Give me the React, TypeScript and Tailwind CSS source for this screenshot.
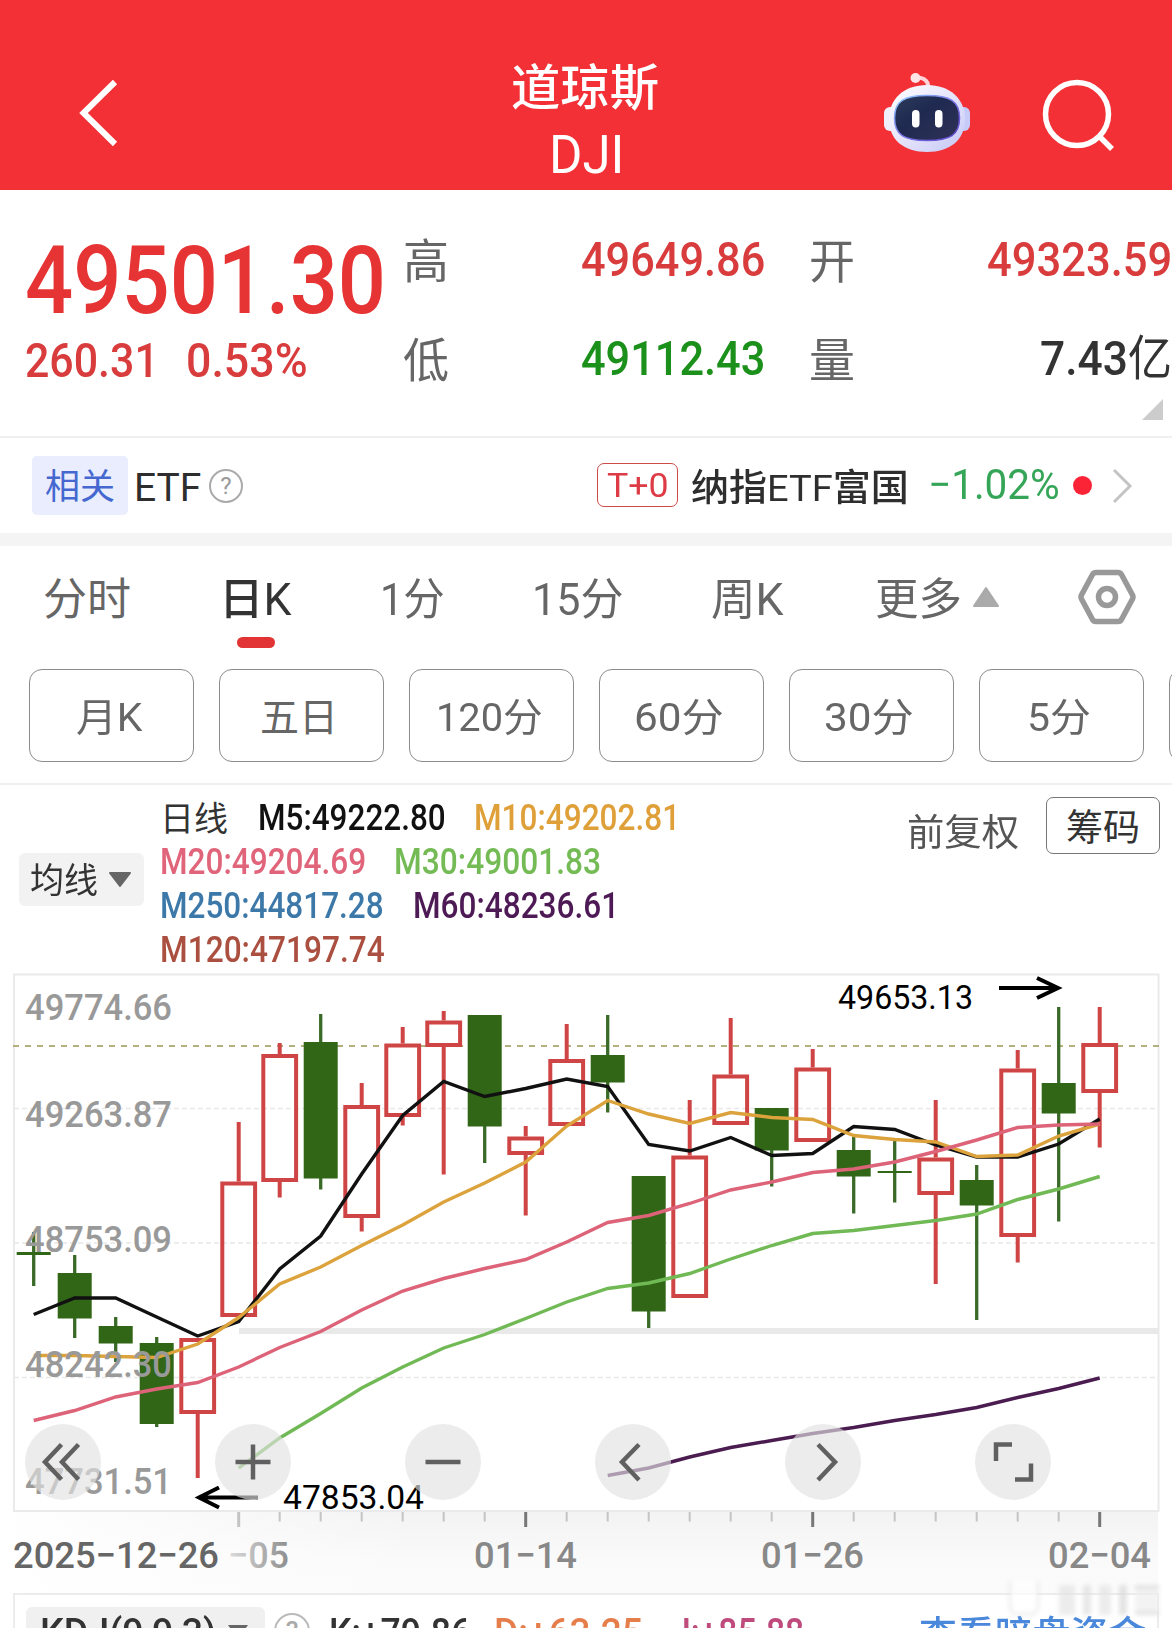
import { useLayoutEffect, useRef, useState } from 'react';
import type { ReactNode } from 'react';

type FitProps = {
  children: ReactNode;
  className?: string;
};

// Stretches its text horizontally so that it fills the width given in className.
function Fit({ children, className = '' }: FitProps) {
  const box = useRef<HTMLDivElement>(null);
  const text = useRef<HTMLSpanElement>(null);
  const [scale, setScale] = useState(1);

  useLayoutEffect(() => {
    if (box.current && text.current) {
      setScale(box.current.clientWidth / text.current.offsetWidth);
    }
  }, []);

  return (
    <div ref={box} className={`shrink-0 whitespace-nowrap leading-none ${className}`}>
      <span ref={text} className="inline-block origin-left" style={{ transform: `scaleX(${scale})` }}>
        {children}
      </span>
    </div>
  );
}

function RobotIcon() {
  return (
    <svg viewBox="882 70 90 84" className="h-[84px] w-[90px]">
      <defs>
        <linearGradient id="helmet" x1="0" y1="0" x2="1" y2="1">
          <stop offset="0" stopColor="#ffffff" />
          <stop offset="0.5" stopColor="#e6e4fb" />
          <stop offset="1" stopColor="#c3c6f6" />
        </linearGradient>
        <linearGradient id="visor" x1="0" y1="0" x2="1" y2="1">
          <stop offset="0" stopColor="#2c3a5c" />
          <stop offset="0.4" stopColor="#1f2a50" />
          <stop offset="1" stopColor="#2f3158" />
        </linearGradient>
        <linearGradient id="rim" x1="0" y1="0" x2="1" y2="1">
          <stop offset="0" stopColor="#8fd0ff" />
          <stop offset="0.5" stopColor="#7d78e8" />
          <stop offset="1" stopColor="#5b3fc4" />
        </linearGradient>
      </defs>
      <path d="M915 79C920 76 929 79 928 88" fill="none" stroke="#ffd3d8" strokeWidth="4" />
      <circle cx="915.500" cy="78" r="5" fill="#ffe3e6" />
      <rect x="884" y="107" width="14" height="24" rx="6" fill="#f1eefc" />
      <rect x="956" y="107" width="14" height="24" rx="6" fill="#c6caf8" />
      <path d="M927 85C950 85 965 99 965 119C965 140 950 152 927 152C904 152 889 140 889 119C889 99 904 85 927 85Z" fill="url(#helmet)" />
      <path d="M927 95.500C950 95.500 959.500 101 959.500 118C959.500 135 950 140.500 927 140.500C904 140.500 894.500 135 894.500 118C894.500 101 904 95.500 927 95.500Z" fill="url(#visor)" stroke="url(#rim)" strokeWidth="1.500" />
      <rect x="912" y="110" width="7.500" height="17.500" rx="3.700" fill="#fff" />
      <rect x="935" y="110" width="7.500" height="17.500" rx="3.700" fill="#fff" />
    </svg>
  );
}

function Header() {
  return (
    <header className="flex h-[190px] bg-[#f23035] text-white">
      <svg viewBox="0 0 50 80" className="mt-[73px] ml-[73px] h-20 w-[50px]">
        <path d="M42 9L10.500 40L42 71" fill="none" stroke="#fff" strokeWidth="6" />
      </svg>
      <div className="ml-[388px] flex w-[150px] flex-col items-center pt-[64px]">
        <Fit className="-ml-[2px] w-[148px] text-[49px] font-medium">道琼斯</Fit>
        <Fit className="mt-[16px] w-[75px] text-[53px]">DJI</Fit>
      </div>
      <div className="mt-[70px] ml-[221px]">
        <RobotIcon />
      </div>
      <svg viewBox="0 0 80 80" className="mt-[74px] ml-[66px] h-20 w-20">
        <ellipse cx="39" cy="40" rx="31.500" ry="31.500" fill="none" stroke="#fff" strokeWidth="5.500" />
        <path d="M61 62L74 75" stroke="#fff" strokeWidth="5.500" />
      </svg>
    </header>
  );
}

function Quote() {
  return (
    <section className="relative flex h-[248px] border-b-2 border-[#f0f0f0]">
      <div className="w-[402px] shrink-0 pt-[44px] pl-[25px] text-[#e63434]">
        <Fit className="w-[361px] text-[94px] font-medium">49501.30</Fit>
        <div className="mt-[9px] flex text-[48px] font-medium text-[#d93c3c]">
          <Fit className="w-[134px]">260.31</Fit>
          <Fit className="ml-[27px] w-[122px]">0.53%</Fit>
        </div>
      </div>
      <div className="grid h-min grid-cols-[177px_230px_177px_186px] gap-y-[51px] pt-[46px] text-[48px] font-medium">
        <Fit className="mt-[2px] ml-[1px] -mb-[2px] w-[46px] text-[47px] font-normal text-[#666]">高</Fit>
        <Fit className="ml-[2px] w-[184px] text-[#d93c3c]">49649.86</Fit>
        <Fit className="mt-[2px] -mb-[2px] w-[46px] text-[47px] font-normal text-[#666]">开</Fit>
        <Fit className="ml-[1px] w-[185px] text-[#d93c3c]">49323.59</Fit>
        <Fit className="mt-[2px] ml-[1px] -mb-[2px] w-[46px] text-[47px] font-normal text-[#666]">低</Fit>
        <Fit className="ml-[2px] w-[184px] text-[#1b901b]">49112.43</Fit>
        <Fit className="mt-[2px] -mb-[2px] w-[46px] text-[47px] font-normal text-[#666]">量</Fit>
        <Fit className="ml-[54px] w-[132px] text-[#333]">
          7.43<span className="font-normal">亿</span>
        </Fit>
      </div>
      <svg viewBox="0 0 21 21" className="absolute right-[9px] bottom-[16px] h-[21px] w-[21px]">
        <path d="M21 0V21H0Z" fill="#ccc" />
      </svg>
    </section>
  );
}

function RelatedEtf() {
  return (
    <section className="flex h-[108px] items-center border-b-[13px] border-[#f4f4f4]">
      <div className="ml-8 flex h-[59px] w-24 items-center justify-center rounded-[5px] bg-[#e9edfd] pt-1">
        <Fit className="w-[70px] text-[35px] text-[#4468d0]">相关</Fit>
      </div>
      <Fit className="mt-[5px] ml-[6px] w-[67px] text-[39px] text-[#2e2e2e]">ETF</Fit>
      <div className="ml-[8px] flex h-[34px] w-[34px] items-center justify-center rounded-full border-2 border-[#aaa] text-[24px] leading-none text-[#999]">
        ?
      </div>
      <div className="-mt-[2px] ml-[354px] flex h-11 w-[81px] items-center justify-center rounded-[7px] border-[1.5px] border-[#cc4a4a]">
        <Fit className="w-[62px] text-[34px] text-[#dd3b45]">T+0</Fit>
      </div>
      <Fit className="mt-[5px] ml-[13px] w-[218px] text-[37px] font-medium text-[#2e2e2e]">
        纳指<span className="font-normal">ETF</span>富国
      </Fit>
      <Fit className="-mt-[2px] ml-[19px] w-[132px] text-[42px] text-[#35a558]">−1.02%</Fit>
      <div className="ml-[13px] h-[19px] w-[19px] rounded-full bg-[#fb2436]" />
      <svg viewBox="0 0 22 36" className="ml-[20px] h-9 w-[22px]">
        <path d="M2 2L18 18L2 34" fill="none" stroke="#c4c4c4" strokeWidth="3" />
      </svg>
    </section>
  );
}

function PeriodTabs() {
  return (
    <nav className="flex h-[104px] items-center text-[44px] text-[#666]">
      <Fit className="mt-[4px] ml-[43px] w-[88px]">分时</Fit>
      <div className="relative mt-[4px] ml-[88px] font-medium text-[#333]">
        <Fit className="w-[73px]">
          日<span className="font-normal">K</span>
        </Fit>
        <div className="absolute -bottom-[26px] left-[18px] h-[11px] w-[38px] rounded-full bg-[#e23434]" />
      </div>
      <Fit className="mt-[4px] ml-[88px] w-[65px]">1分</Fit>
      <Fit className="mt-[4px] ml-[87px] w-[91px]">15分</Fit>
      <Fit className="mt-[4px] ml-[88px] w-[73px]">周K</Fit>
      <Fit className="mt-[4px] ml-[91px] w-[87px]">更多</Fit>
      <svg viewBox="0 0 28 22" className="-mt-[2px] ml-[10px] h-[22px] w-[28px]">
        <path d="M14 2L26 20H2Z" fill="#aaa" stroke="#aaa" strokeWidth="2" strokeLinejoin="round" />
      </svg>
      <svg viewBox="0 0 58 56" className="-mt-[2px] ml-[78px] h-14 w-[58px]">
        <path d="M18 3.500H40Q42.500 3.500 43.500 5.500L54.500 26Q55.500 28 54.500 30L43.500 50.500Q42.500 52.500 40 52.500H18Q15.500 52.500 14.500 50.500L3.500 30Q2.500 28 3.500 26L14.500 5.500Q15.500 3.500 18 3.500Z" fill="none" stroke="#999" strokeWidth="5.500" />
        <circle cx="29" cy="28" r="8.500" fill="none" stroke="#999" strokeWidth="5.500" />
      </svg>
    </nav>
  );
}

const PERIODS = [
  { label: '月K', width: 'w-[66px]' },
  { label: '五日', width: 'w-[78px]' },
  { label: '120分', width: 'w-[107px]' },
  { label: '60分', width: 'w-[90px]' },
  { label: '30分', width: 'w-[90px]' },
  { label: '5分', width: 'w-[64px]' },
  { label: '', width: 'w-1' },
];

function PeriodButtons() {
  return (
    <div className="flex h-[135px] gap-[25px] overflow-hidden border-b-2 border-[#f0f0f0] pt-[19px] pl-[29px]">
      {PERIODS.map((p) => (
        <button
          key={p.label}
          className="flex h-[93px] w-[165px] shrink-0 items-center justify-center rounded-[13px] border border-[#8c8c8c] pt-[6px] pr-[5px] text-left text-[39px] text-[#666]"
        >
          {p.label && <Fit className={p.width}>{p.label}</Fit>}
        </button>
      ))}
    </div>
  );
}

function MaLegend() {
  return (
    <section className="flex h-[186px] pt-[10px] text-[36px]">
      <button className="mt-[58px] ml-[19px] flex h-[53px] w-[125px] items-center rounded-[6px] bg-[#f2f2f2] pl-[11px] text-left">
        <Fit className="mt-[4px] w-[68px] text-[35px] text-[#333]">均线</Fit>
        <svg viewBox="0 0 24 17" className="ml-[10px] h-[17px] w-6">
          <path d="M2 2H22L12 15Z" fill="#666" stroke="#666" strokeWidth="2" strokeLinejoin="round" />
        </svg>
      </button>
      <div className="ml-[16px] w-[744px]">
        <div className="flex h-11 items-center">
          <Fit className="mt-[3px] w-[68px] text-[34px] text-[#333]">日线</Fit>
          <Fit className="mt-[1px] ml-[30px] w-[188px] font-medium text-[#111]">M5:49222.80</Fit>
          <Fit className="mt-[1px] ml-[28px] w-[206px] font-medium text-[#dfa03a]">M10:49202.81</Fit>
        </div>
        <div className="flex h-11 items-center pt-px font-medium">
          <Fit className="w-[206px] text-[#e0647a]">M20:49204.69</Fit>
          <Fit className="ml-[28px] w-[207px] text-[#74bb55]">M30:49001.83</Fit>
        </div>
        <div className="flex h-11 items-center pt-px font-medium">
          <Fit className="w-[224px] text-[#3c78a8]">M250:44817.28</Fit>
          <Fit className="ml-[29px] w-[206px] text-[#4d1a55]">M60:48236.61</Fit>
        </div>
        <div className="flex h-11 items-center pt-px font-medium">
          <Fit className="w-[225px] text-[#ab5040]">M120:47197.74</Fit>
        </div>
      </div>
      <Fit className="mt-[20px] ml-[3px] w-[112px] text-[37px] text-[#555]">前复权</Fit>
      <button className="mt-[2px] ml-[27px] flex h-[57px] w-[114px] items-center justify-center rounded-[7px] border-[1.5px] border-[#777] pt-[5px] text-left">
        <Fit className="w-[74px] text-[37px] text-[#333]">筹码</Fit>
      </button>
    </section>
  );
}

type Candle = {
  up: boolean;
  high: number;
  top: number;
  bottom: number;
  low: number;
};

const up = (high: number, top: number, bottom: number, low: number): Candle => ({ up: true, high, top, bottom, low });
const down = (high: number, top: number, bottom: number, low: number): Candle => ({ up: false, high, top, bottom, low });

const CANDLES: Candle[] = [
  down(1232, 1252, 1255, 1286),
  down(1255, 1273, 1318.5, 1338),
  down(1317, 1326, 1343.5, 1362),
  down(1337, 1343, 1424, 1427),
  up(1338, 1338, 1414, 1478),
  up(1122, 1181.5, 1317, 1317),
  up(1043, 1054, 1182, 1197.5),
  down(1014, 1042, 1178.5, 1189.5),
  up(1083, 1105, 1218, 1231.5),
  up(1027, 1043.5, 1117, 1125.5),
  up(1011, 1020.5, 1047, 1174.5),
  down(1015, 1015, 1126.5, 1163),
  up(1126, 1136.5, 1155, 1215.5),
  up(1024, 1059, 1126, 1126),
  down(1015, 1055, 1082.5, 1112.5),
  down(1176, 1176, 1311.5, 1328),
  up(1100, 1155.5, 1298, 1298),
  up(1018, 1074.5, 1125, 1125),
  down(1108, 1108, 1150.5, 1186.5),
  up(1049, 1067.5, 1142, 1142),
  down(1137, 1150, 1176.5, 1213.5),
  down(1141, 1171, 1173, 1202.5),
  up(1100, 1157.5, 1195, 1284),
  down(1165, 1180, 1205.5, 1320),
  up(1050, 1068.5, 1237, 1262.5),
  down(1007, 1083, 1113.5, 1221.5),
  up(1007, 1043, 1093, 1147.5),
];

const AVERAGES = [
  {
    color: '#111',
    start: 0,
    values: [1314.5, 1298, 1298, 1317, 1336, 1321.5, 1269, 1236, 1174, 1115.5, 1081.5, 1096.5, 1088.5, 1079, 1086.5, 1144.5, 1151, 1137.5, 1155.5, 1153.5, 1126.5, 1129.5, 1145, 1157, 1157, 1144, 1119],
  },
  {
    color: '#dca23c',
    start: 0,
    values: [1355.5, 1355.5, 1356.5, 1357.5, 1344, 1317.5, 1284, 1267, 1245.5, 1225, 1202, 1183, 1162, 1126, 1100.5, 1114, 1123.5, 1112.5, 1117.5, 1119.5, 1135.5, 1139.5, 1142, 1156.5, 1155, 1136, 1124],
  },
  {
    color: '#dd6379',
    start: 0,
    values: [1420.5, 1410.5, 1397, 1389, 1382.5, 1367, 1347.5, 1331.5, 1310, 1291, 1278.5, 1268.5, 1259.5, 1242, 1222.5, 1215.5, 1203.5, 1190, 1182, 1172.5, 1169, 1162, 1151.5, 1140, 1127.5, 1125, 1124],
  },
  {
    color: '#71b955',
    start: 5,
    values: [1468, 1438, 1413.5, 1388, 1367, 1348, 1334.5, 1318.5, 1302, 1288.5, 1283, 1273.5, 1259, 1245.5, 1233.5, 1230.5, 1225.5, 1220.5, 1214, 1199.5, 1189, 1176.5],
  },
  {
    color: '#4a1c50',
    start: 14,
    values: [1475.5, 1468, 1457, 1447.5, 1440.5, 1433.5, 1427.5, 1420.5, 1414.5, 1407.5, 1397.5, 1388.5, 1378],
  },
];

const PRICE_LABELS = [
  { text: '49774.66', y: 1020 },
  { text: '49263.87', y: 1127 },
  { text: '48753.09', y: 1252 },
  { text: '48242.30', y: 1377 },
  { text: '47731.51', y: 1494 },
];

const DATE_LABELS = [
  { text: '01−14', x: 474, width: 103 },
  { text: '01−26', x: 761, width: 103 },
  { text: '02−04', x: 1048, width: 103 },
];

const TICKS = Array.from({ length: 22 }, (_, i) => i + 5);

const xAt = (i: number) => 33.7 + i * 41;

function CandleShape({ candle, x }: { candle: Candle; x: number }) {
  if (candle.up) {
    return (
      <g stroke="#cf4444" strokeWidth="4">
        <path d={`M${x} ${candle.high}V${candle.top}M${x} ${candle.bottom}V${candle.low}`} />
        <rect x={x - 16.4} y={candle.top + 2} width="32.8" height={candle.bottom - candle.top - 4} fill="none" />
      </g>
    );
  }
  return (
    <g fill="#306616">
      <path d={`M${x} ${candle.high}V${candle.low}`} stroke="#3a6a28" strokeWidth="3.300" />
      <rect x={x - 17} y={candle.top} width="34" height={candle.bottom - candle.top} />
    </g>
  );
}

function KlineChart() {
  return (
    <svg viewBox="0 971 1172 622" className="block h-[622px] w-[1172px]">
      <defs>
        <linearGradient id="axis" x1="0" y1="0" x2="0" y2="1">
          <stop offset="0" stopColor="#f3f3f3" />
          <stop offset="0.6" stopColor="#fafafa" />
          <stop offset="1" stopColor="#fbfbfb" />
        </linearGradient>
        <linearGradient id="axisFade" x1="0" y1="0" x2="1" y2="0">
          <stop offset="0" stopColor="#fff" />
          <stop offset="1" stopColor="#fff" stopOpacity="0" />
        </linearGradient>
        <linearGradient id="dateFade" gradientUnits="userSpaceOnUse" x1="228" y1="0" x2="290" y2="0">
          <stop offset="0" stopColor="#dcdcdc" />
          <stop offset="1" stopColor="#8c8c8c" />
        </linearGradient>
      </defs>

      <rect x="0" y="1512" width="1158" height="81" fill="url(#axis)" />
      <rect x="0" y="1512" width="420" height="81" fill="url(#axisFade)" />
      <rect x="14" y="974.500" width="1144.500" height="536.500" fill="#fff" stroke="#eaeaec" strokeWidth="2" />

      <g stroke="#e8e8e8" strokeWidth="1.500" strokeDasharray="5 3">
        <path d="M14 1108.500H1158" />
        <path d="M14 1243H1158" />
        <path d="M14 1377.500H1158" />
      </g>
      <path d="M239 1331H1159" stroke="#e9e9e9" strokeWidth="6" />
      <path d="M13 1046H1159" stroke="#b3b07e" strokeWidth="2" strokeDasharray="6 6" />

      {CANDLES.map((candle, i) => (
        <CandleShape key={i} candle={candle} x={xAt(i)} />
      ))}

      {AVERAGES.map((line) => (
        <polyline
          key={line.color}
          points={line.values.map((y, i) => `${xAt(line.start + i)},${y}`).join(' ')}
          fill="none"
          stroke={line.color}
          strokeWidth="3.400"
        />
      ))}

      <g fontSize="37.500" fontWeight="500" fill="#999">
        {PRICE_LABELS.map((label) => (
          <text key={label.text} x="25" y={label.y} textLength="147" lengthAdjust="spacingAndGlyphs">
            {label.text}
          </text>
        ))}
      </g>

      <g fontSize="34" fill="#000">
        <text x="838" y="1008.500" textLength="135" lengthAdjust="spacingAndGlyphs">49653.13</text>
        <text x="283" y="1509" textLength="141" lengthAdjust="spacingAndGlyphs">47853.04</text>
      </g>
      <g fill="none" stroke="#000" strokeWidth="4">
        <path d="M999 988H1058M1037 978L1058 988L1037 998" />
        <path d="M258 1497.500H199M219 1487.500L199 1497.500L219 1507.500" />
      </g>

      {TICKS.map((i) => {
        const major = (i - 5) % 7 === 0;
        return (
          <path
            key={i}
            d={`M${xAt(i)} 1512V${major ? 1527 : 1521.5}`}
            stroke={major && i > 5 ? '#777' : '#c4c4c4'}
            strokeWidth={major ? 3 : 2}
          />
        );
      })}

      <g fontSize="37.500" fontWeight="500" fill="#888">
        <text x="13" y="1568" textLength="206" lengthAdjust="spacingAndGlyphs" fill="#666">2025−12−26</text>
        <text x="228" y="1568" textLength="61" lengthAdjust="spacingAndGlyphs" fill="url(#dateFade)">−05</text>
        {DATE_LABELS.map((label) => (
          <text key={label.text} x={label.x} y="1568" textLength={label.width} lengthAdjust="spacingAndGlyphs">
            {label.text}
          </text>
        ))}
      </g>
    </svg>
  );
}

// Icon paths are drawn in a 76x76 box.
const CONTROLS = [
  { name: 'rewind', d: 'M36.500 20.500L20 38L36.500 55.500M53.500 20.500L37 38L53.500 55.500' },
  { name: 'zoom in', d: 'M20.500 38H55.500M38 20.500V55.500' },
  { name: 'zoom out', d: 'M20.500 38H55.500' },
  { name: 'previous', d: 'M44 20.500L27 38L44 56' },
  { name: 'next', d: 'M33 20.500L50 38L33 56' },
  { name: 'fullscreen', d: 'M37 20.500H21V37M40 55.500H56V39.500' },
];

function ChartControls() {
  return (
    <div className="absolute top-[453px] left-[25px] flex gap-[114px]">
      {CONTROLS.map((c) => (
        <button key={c.name} aria-label={c.name} className="h-[76px] w-[76px] rounded-full bg-[#e2e2e2]/65">
          <svg viewBox="0 0 76 76" className="h-[76px] w-[76px]">
            <path d={c.d} fill="none" stroke="#606060" strokeWidth="4.500" />
          </svg>
        </button>
      ))}
    </div>
  );
}

function IndicatorBar() {
  return (
    <section className="relative mx-[13px] h-[80px] border-2 border-[#ececec]">
      <div className="flex pt-[12px] pl-[11px] text-[38px] font-medium">
        <div className="flex h-[56px] w-[239px] shrink-0 items-start rounded-[6px] bg-[#f0f0f0] pt-[7px] pl-[14px] text-[#333]">
          <Fit className="w-[176px]">KDJ(9,9,3)</Fit>
          <svg viewBox="0 0 22 16" className="mt-[10px] ml-[11px] h-4 w-[22px]">
            <path d="M1 1H21L11 15Z" fill="#666" />
          </svg>
        </div>
        <div className="mt-[6px] ml-[9px] flex h-9 w-9 items-center justify-center rounded-full border-2 border-[#bbb] text-[26px] leading-none text-[#aaa]">
          ?
        </div>
        <Fit className="mt-[7px] ml-[19px] w-[142px] text-[#333]">K:+79.86</Fit>
        <Fit className="mt-[7px] ml-[23px] w-[149px] text-[#e67e4c]">D:+63.25</Fit>
        <Fit className="mt-[7px] ml-[29px] w-[132px] text-[#bf4a7c]">J:+85.88</Fit>
        <Fit className="mt-[9px] ml-[115px] w-[227px] text-[#4a88dc]">查看暗盘资金</Fit>
      </div>
      <div className="absolute -top-[14px] -right-[2px] flex h-[34px] gap-2 opacity-70 blur-[2px]">
        <div className="h-[34px] w-[30px] rounded-b-lg border-x-2 border-b-2 border-[#dcdcdc] bg-white" />
        <div className="mt-1 ml-3 h-[30px] w-4 bg-[#e4e4e4]" />
        <div className="mt-1 h-[30px] w-2 bg-[#dedede]" />
        <div className="mt-1 h-[30px] w-3 bg-[#e4e4e4]" />
        <div className="mt-1 h-[30px] w-2 bg-[#d8d8d8]" />
        <div className="mt-1 h-[30px] w-6 border-y-4 border-[#d8d8d8] bg-[#eee]" />
      </div>
    </section>
  );
}

export default function App() {
  return (
    <div className="h-[1628px] w-[1172px] overflow-hidden bg-white font-[Roboto,'Noto_Sans_CJK_SC',sans-serif]">
      <Header />
      <Quote />
      <RelatedEtf />
      <PeriodTabs />
      <PeriodButtons />
      <MaLegend />
      <div className="relative">
        <KlineChart />
        <ChartControls />
      </div>
      <IndicatorBar />
    </div>
  );
}
